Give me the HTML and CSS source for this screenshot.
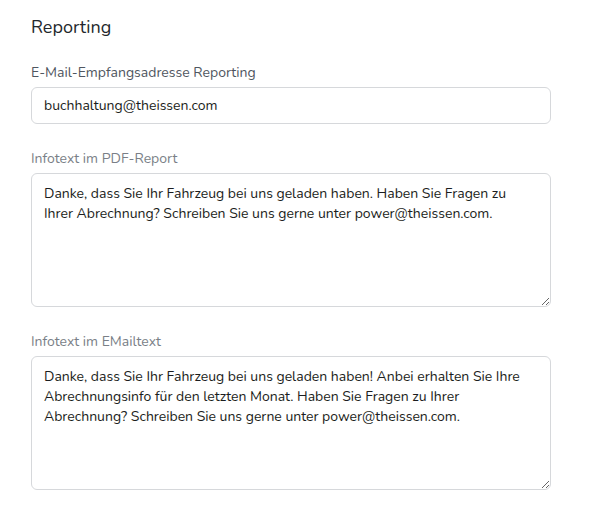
FILE: index.html
```html
<!DOCTYPE html>
<html lang="de">
<head>
<meta charset="utf-8">
<title>Reporting</title>
<link rel="stylesheet" href="styles.css">
</head>
<body>
<section class="panel">
  <h2 class="title">Reporting</h2>
  <div class="field">
    <label class="label label-strong" for="mail">E-Mail-Empfangsadresse Reporting</label>
    <input class="input" id="mail" type="text" value="buchhaltung@theissen.com">
  </div>
  <div class="field">
    <label class="label" for="pdf">Infotext im PDF-Report</label>
    <textarea class="textarea" id="pdf">Danke, dass Sie Ihr Fahrzeug bei uns geladen haben. Haben Sie Fragen zu Ihrer Abrechnung? Schreiben Sie uns gerne unter power@theissen.com.</textarea>
  </div>
  <div class="field">
    <label class="label" for="mailtext">Infotext im EMailtext</label>
    <textarea class="textarea" id="mailtext">Danke, dass Sie Ihr Fahrzeug bei uns geladen haben! Anbei erhalten Sie Ihre Abrechnungsinfo für den letzten Monat. Haben Sie Fragen zu Ihrer Abrechnung? Schreiben Sie uns gerne unter power@theissen.com.</textarea>
  </div>
</section>
</body>
</html>
```
FILE: styles.css
```css
html, body {
  margin: 0;
  padding: 0;
  background: #ffffff;
}
body {
  font-family: "Nunito", "Lato", "Noto Sans", sans-serif;
  color: #1f2328;
}
.panel {
  width: 520px;
  padding: 13px 0 0 31px;
  display: flex;
  flex-direction: column;
}
.title {
  margin: 0 0 22px 0;
  font-size: 18px;
  font-weight: 400;
  line-height: 28px;
  color: #23272b;
}
.field {
  display: flex;
  flex-direction: column;
  gap: 4px;
  margin-bottom: 25px;
}
.label {
  font-size: 14px;
  line-height: 20px;
  color: #7a7f87;
}
.label-strong {
  color: #4f5660;
}
.input, .textarea {
  box-sizing: border-box;
  width: 520px;
  margin: 0;
  font-family: inherit;
  font-size: 14px;
  line-height: 20px;
  color: #1b1d20;
  background: #fff;
  border: 1px solid #d6d8db;
  border-radius: 6px;
  padding: 8px 12px;
  outline: none;
}
.input {
  height: 37px;
}
.textarea {
  height: 134px;
  padding: 10px 12px;
  resize: vertical;
}
```
